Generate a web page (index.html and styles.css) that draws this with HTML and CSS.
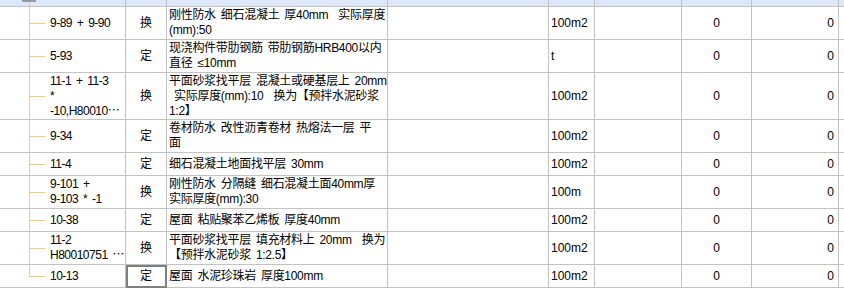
FILE: index.html
```html
<!DOCTYPE html>
<html lang="zh-CN">
<head>
<meta charset="utf-8">
<title>定额列表</title>
<link rel="stylesheet" href="styles.css">
</head>
<body>
<div class="viewport">
  <div class="grid">
    <div class="row head">
      <div class="c code tree-top"></div><div class="c"></div><div class="c"></div><div class="c"></div><div class="c"></div><div class="c"></div><div class="c"></div><div class="c"></div><div class="c"></div>
    </div>

    <div class="row h2">
      <div class="c code tree">9-89 + 9-90</div>
      <div class="c type">换</div>
      <div class="c name">刚性防水 细石混凝土 厚40mm  实际厚度<br>(mm):50</div>
      <div class="c"></div>
      <div class="c unit">100m2</div>
      <div class="c"></div>
      <div class="c num-c">0</div>
      <div class="c num-r">0</div>
      <div class="c"></div>
    </div>

    <div class="row h2">
      <div class="c code tree">5-93</div>
      <div class="c type">定</div>
      <div class="c name">现浇构件带肋钢筋 带肋钢筋HRB400以内<br>直径 ≤10mm</div>
      <div class="c"></div>
      <div class="c unit">t</div>
      <div class="c"></div>
      <div class="c num-c">0</div>
      <div class="c num-r">0</div>
      <div class="c"></div>
    </div>

    <div class="row h3">
      <div class="c code tree">11-1 + 11-3<br>*<br>-10,H80010⋯</div>
      <div class="c type">换</div>
      <div class="c name">平面砂浆找平层 混凝土或硬基层上 20mm<br> 实际厚度(mm):10  换为【预拌水泥砂浆<br>1:2】</div>
      <div class="c"></div>
      <div class="c unit">100m2</div>
      <div class="c"></div>
      <div class="c num-c">0</div>
      <div class="c num-r">0</div>
      <div class="c"></div>
    </div>

    <div class="row h2">
      <div class="c code tree">9-34</div>
      <div class="c type">定</div>
      <div class="c name">卷材防水 改性沥青卷材 热熔法一层 平<br>面</div>
      <div class="c"></div>
      <div class="c unit">100m2</div>
      <div class="c"></div>
      <div class="c num-c">0</div>
      <div class="c num-r">0</div>
      <div class="c"></div>
    </div>

    <div class="row h1">
      <div class="c code tree">11-4</div>
      <div class="c type">定</div>
      <div class="c name">细石混凝土地面找平层 30mm</div>
      <div class="c"></div>
      <div class="c unit">100m2</div>
      <div class="c"></div>
      <div class="c num-c">0</div>
      <div class="c num-r">0</div>
      <div class="c"></div>
    </div>

    <div class="row h2">
      <div class="c code tree">9-101 +<br>9-103 * -1</div>
      <div class="c type">换</div>
      <div class="c name">刚性防水 分隔缝 细石混凝土面40mm厚<br>实际厚度(mm):30</div>
      <div class="c"></div>
      <div class="c unit">100m</div>
      <div class="c"></div>
      <div class="c num-c">0</div>
      <div class="c num-r">0</div>
      <div class="c"></div>
    </div>

    <div class="row h1">
      <div class="c code tree">10-38</div>
      <div class="c type">定</div>
      <div class="c name">屋面 粘贴聚苯乙烯板 厚度40mm</div>
      <div class="c"></div>
      <div class="c unit">100m2</div>
      <div class="c"></div>
      <div class="c num-c">0</div>
      <div class="c num-r">0</div>
      <div class="c"></div>
    </div>

    <div class="row h2">
      <div class="c code tree">11-2<br>H80010751 ⋯</div>
      <div class="c type">换</div>
      <div class="c name">平面砂浆找平层 填充材料上 20mm  换为<br>【预拌水泥砂浆 1:2.5】</div>
      <div class="c"></div>
      <div class="c unit">100m2</div>
      <div class="c"></div>
      <div class="c num-c">0</div>
      <div class="c num-r">0</div>
      <div class="c"></div>
    </div>

    <div class="row h1">
      <div class="c code tree-last">10-13</div>
      <div class="c type selected">定</div>
      <div class="c name">屋面 水泥珍珠岩 厚度100mm</div>
      <div class="c"></div>
      <div class="c unit">100m2</div>
      <div class="c"></div>
      <div class="c num-c">0</div>
      <div class="c num-r">0</div>
      <div class="c"></div>
    </div>
  </div>
</div>
</body>
</html>
```

FILE: styles.css
```css
html, body {
  margin: 0;
  padding: 0;
  background: #ffffff;
  overflow: hidden;
}

body {
  font-family: "Liberation Sans", "Noto Sans CJK SC", sans-serif;
  font-size: 12px;
  line-height: 15px;
  color: #000000;
}

.viewport {
  width: 844px;
  height: 295px;
  overflow: hidden;
}

.grid {
  width: 859px;
}

.row {
  display: grid;
  grid-template-columns: 126px 41px 221px 161px 46px 87px 70px 87px 20px;
}

.head { height: 7px; background: #dce8fa; }
.h1 { height: 23px; }
.h2 { height: 33px; }
.h3 { height: 47px; }

.c {
  box-sizing: border-box;
  border-right: 1px solid #c3c3c3;
  border-bottom: 1px solid #c3c3c3;
  display: flex;
  align-items: center;
  white-space: pre;
  overflow: hidden;
}

.code {
  padding-left: 50px;
  word-spacing: 2px;
  letter-spacing: -0.5px;
}

.tree {
  background:
    linear-gradient(#fcca73, #fcca73) 29px 0 / 1px 100% no-repeat,
    linear-gradient(#fcca73, #fcca73) 29px 50% / 16px 1px no-repeat;
}

.tree-last {
  background:
    linear-gradient(#fcca73, #fcca73) 29px 0 / 1px 50% no-repeat,
    linear-gradient(#fcca73, #fcca73) 29px 50% / 16px 1px no-repeat;
}

.tree-top {
  background:
    linear-gradient(#9a9a9a, #9a9a9a) 22px 0 / 14px 2px no-repeat,
    linear-gradient(#fcca73, #fcca73) 29px 0 / 1px 100% no-repeat;
}

.type {
  justify-content: center;
}

.selected {
  outline: 2px solid #7f7f7f;
  outline-offset: -2px;
}

.name {
  padding-left: 2px;
  word-spacing: 2px;
  letter-spacing: -0.3px;
}

.unit {
  padding-left: 2px;
}

.num-c {
  justify-content: center;
}

.num-r {
  justify-content: flex-end;
  padding-right: 4px;
}
```
